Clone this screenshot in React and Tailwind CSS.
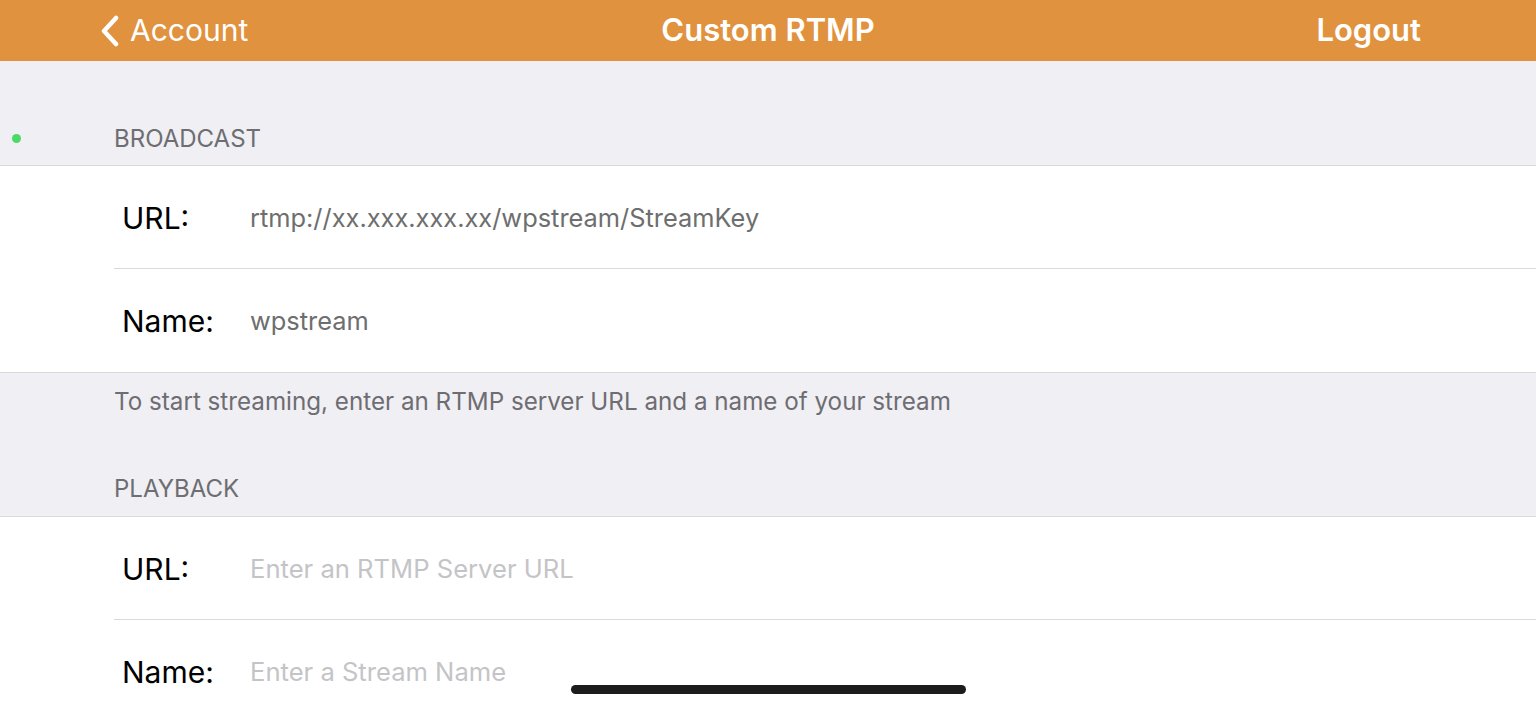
// Custom RTMP settings screen, iOS grouped table style.

const rows = {
  broadcast: [
    { label: "URL:", value: "rtmp://xx.xxx.xxx.xx/wpstream/StreamKey" },
    { label: "Name:", value: "wpstream" },
  ],
  playback: [
    { label: "URL:", placeholder: "Enter an RTMP Server URL" },
    { label: "Name:", placeholder: "Enter a Stream Name" },
  ],
};

function Row({ label, value, placeholder, last }) {
  return (
    <div className="bg-white">
      <div
        className={`ml-[114px] flex h-[103px] items-center pl-[8px] pt-[2px] ${last ? "" : "border-b border-[#d9d9dd]"}`}
      >
        <span className="w-[128px] shrink-0 text-[30px] text-black">{label}</span>
        {value ? (
          <span className="text-[25.4px] text-[#6e6e6e]">{value}</span>
        ) : (
          <span className="text-[25.6px] text-[#c4c4c7]">{placeholder}</span>
        )}
      </div>
    </div>
  );
}

function Group({ items }) {
  return (
    <div className="border-y border-[#d9d9dd]">
      {items.map((r, i) => (
        <Row key={i} {...r} last={i === items.length - 1} />
      ))}
    </div>
  );
}

export default function App() {
  return (
    <div className="relative h-[709px] w-[1536px] overflow-hidden bg-[#f0eff4] font-['Inter',sans-serif]">
      {/* Nav bar */}
      <div className="grid h-[61px] grid-cols-[1fr_auto_1fr] items-center bg-[#e0923e] text-white">
        <div className="flex items-center gap-[10px] pl-[100px]">
          <svg width="20" height="32" viewBox="0 0 20 32" fill="none">
            <path d="M16 3 L4 16 L16 29" stroke="white" strokeWidth="4.5" strokeLinecap="round" strokeLinejoin="round" />
          </svg>
          <span className="text-[30px]">Account</span>
        </div>
        <div className="text-[31px] font-semibold">Custom RTMP</div>
        <div className="pr-[115px] text-right text-[31px] font-semibold">Logout</div>
      </div>

      {/* Broadcast section */}
      <div className="relative flex h-[104px] items-end pb-[12px] pl-[114px]">
        <span className="absolute left-[12px] top-[73px] h-[9px] w-[9px] rounded-full bg-[#4cd964]" />
        <span className="text-[24px] leading-[28px] text-[#6d6d72]">BROADCAST</span>
      </div>
      <Group items={rows.broadcast} />

      <div className="pl-[114px] pt-[13px] text-[24.2px] leading-[32px] text-[#6d6d72]">
        To start streaming, enter an RTMP server URL and a name of your stream
      </div>

      {/* Playback section */}
      <div className="flex h-[98px] items-end pb-[13px] pl-[114px]">
        <span className="text-[24px] leading-[28px] text-[#6d6d72]">PLAYBACK</span>
      </div>
      <Group items={rows.playback} />

      {/* Home indicator */}
      <div className="absolute bottom-[15px] left-[571px] h-[9px] w-[395px] rounded-full bg-[#1c1c1c]" />
    </div>
  );
}
